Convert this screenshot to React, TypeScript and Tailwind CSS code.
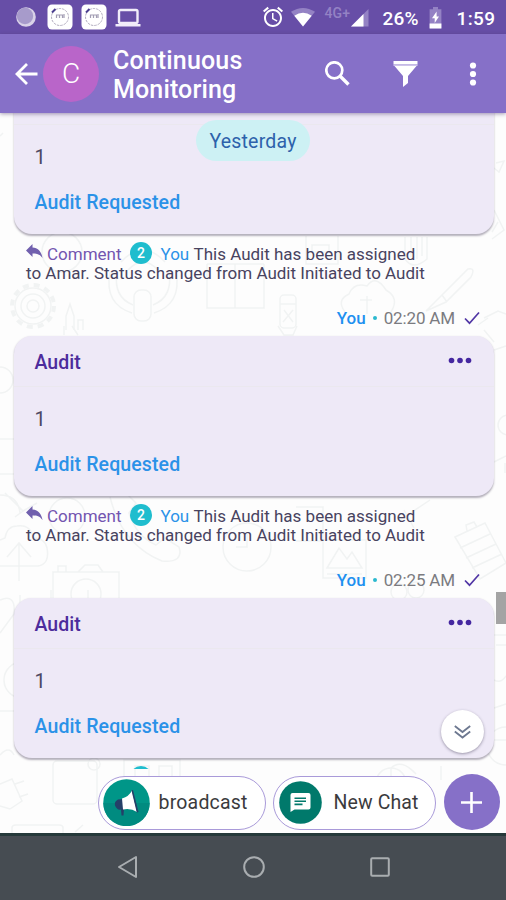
import type { ReactNode } from 'react'
import clsx from 'clsx'

interface Message {
  id: number
  title: string
  value: string
  status: string
  comments: number
  activity?: string[]
  time?: string
}

const ACTIVITY = [
  'This Audit has been assigned',
  'to Amar. Status changed from Audit Initiated to Audit',
]

const MESSAGES: Message[] = [
  { id: 1, title: '', value: '1', status: 'Audit Requested', comments: 2, activity: ACTIVITY, time: '02:20 AM' },
  { id: 2, title: 'Audit', value: '1', status: 'Audit Requested', comments: 2, activity: ACTIVITY, time: '02:25 AM' },
  { id: 3, title: 'Audit', value: '1', status: 'Audit Requested', comments: 2 },
]

const AppBadgeIcon = () => (
  <svg width="26" height="26" viewBox="0 0 26 26" fill="none">
    <rect x="0.5" y="0.5" width="25" height="25" rx="4.5" fill="#fff" />
    <circle cx="13" cy="13" r="8.5" stroke="#b3adbf" strokeDasharray="2.5 1" />
    <path d="M5 8.500L8.500 5" stroke="#4b3f8f" strokeWidth="2" />
    <path d="M9.500 14v-3h3v3m0-3h3v3m1.500-4v4" stroke="#a39eb4" strokeWidth="1.200" />
  </svg>
)

const StatusBar = () => (
  <div className="flex h-[34px] shrink-0 items-center bg-[#674ea7] text-white">
    <svg className="ml-4" width="20" height="20" viewBox="0 0 20 20">
      <circle cx="10" cy="10" r="9.8" fill="#d9d2e8" />
      <circle cx="9" cy="9" r="8.2" fill="#a79bcb" />
    </svg>
    <div className="ml-[10.5px] flex gap-2">
      <AppBadgeIcon />
      <AppBadgeIcon />
    </div>
    <svg className="mt-px ml-[8px]" width="26" height="20" viewBox="0 0 26 20" fill="none">
      <rect x="4" y="2" width="18.5" height="13" rx="1.5" stroke="#f1edfa" strokeWidth="2.4" />
      <path d="M0.5 16h25v2.5h-25z" fill="#f1edfa" />
    </svg>
    <svg className="ml-[120px]" width="24" height="24" viewBox="0 0 24 24" fill="#fff">
      <path d="M22 5.72l-4.6-3.86-1.29 1.53 4.6 3.86L22 5.72zM7.88 3.39L6.6 1.86 2 5.71l1.29 1.53 4.59-3.85zM12.5 8H11v6l4.75 2.85.75-1.23-4-2.37V8zM12 4c-4.97 0-9 4.03-9 9s4.02 9 9 9c4.97 0 9-4.03 9-9s-4.03-9-9-9zm0 16c-3.87 0-7-3.13-7-7s3.13-7 7-7 7 3.13 7 7-3.13 7-7 7z" />
    </svg>
    <svg className="ml-[6px]" width="24" height="20" viewBox="0 0 24 20">
      <path d="M12 19.5L0 4.8Q12-3 24 4.8z" fill="#9482c4" />
      <path d="M12 19.5L3.3 8.8Q12 2.5 20.7 8.8z" fill="#fff" />
    </svg>
    <span className="mb-[8px] ml-[10px] w-[27px] text-[14px] leading-[16px] font-medium tracking-[0.1px] whitespace-nowrap text-[#9482c4]">
      4G+
    </span>
    <svg className="mt-[2px] -ml-[0.5px]" width="18" height="18" viewBox="0 0 18 18">
      <path d="M0 17.5L17.5 0v17.5z" fill="#9482c4" />
      <path d="M0 17.5L12.5 5v12.5z" fill="#fff" />
    </svg>
    <span className="mt-[3px] ml-[13.5px] w-[38px] text-[19px] leading-[22px] font-medium tracking-[0.2px] whitespace-nowrap">
      26%
    </span>
    <svg className="mt-[2px] ml-[8.5px]" width="13" height="22" viewBox="0 0 13 22">
      <path d="M4 0h5v2.2h3.4v19H.6v-19H4z" fill="#9482c4" />
      <path d="M.6 16.5h11.8v5H.6zM7.6 4.5L3 11.3h2.7V16L10 9.5H7.6z" fill="#fff" />
    </svg>
    <span className="mt-[3px] ml-[14.5px] text-[19px] leading-[22px] font-medium tracking-[0.4px] whitespace-nowrap">
      1:59
    </span>
  </div>
)

const Header = () => (
  <header className="z-10 flex h-[79px] shrink-0 items-center bg-[#8670c8] text-white shadow-[0_1px_4px_rgba(60,40,90,0.45)]">
    <svg className="ml-[14.5px]" width="23" height="22" viewBox="0 0 23 22" fill="none">
      <path d="M12 1L2 11l10 10M2 11h20.5" stroke="#fff" strokeWidth="2.8" />
    </svg>
    <div className="ml-[5.5px] flex size-14 items-center justify-center rounded-full bg-[#b965c9] text-[28px] font-light">
      C
    </div>
    <h1 className="mt-[2px] ml-[14px] w-[200px] text-[25px] leading-[29px] font-medium tracking-[0.15px]">
      Continuous Monitoring
    </h1>
    <svg className="ml-[12px]" width="25" height="25" viewBox="0 0 25 25" fill="none">
      <circle cx="9.3" cy="9.3" r="8" stroke="#fff" strokeWidth="2.7" />
      <path d="M15 15l8.5 8.5" stroke="#fff" strokeWidth="3.3" />
    </svg>
    <svg className="ml-[42.5px]" width="25" height="26" viewBox="0 0 25 26">
      <path d="M.5 0h24v3.4H.5z" fill="#fff" />
      <path d="M.5 3.4h24v1.600H.5z" fill="#cfc5ea" />
      <path d="M1.5 5h22L15 15v7l-5 4V15z" fill="#fff" />
    </svg>
    <svg className="ml-[51px]" width="8" height="24" viewBox="0 0 8 24" fill="#fff">
      <circle cx="4" cy="3.5" r="3.1" />
      <circle cx="4" cy="12" r="3.1" />
      <circle cx="4" cy="20.5" r="3.1" />
    </svg>
  </header>
)

// faint doodles behind the conversation
const Wallpaper = () => (
  <svg
    className="absolute inset-0"
    width="506"
    height="720"
    viewBox="0 113 506 720"
    fill="none"
    stroke="#f1f3f3"
    strokeWidth="1.5"
  >
    <path d="M0 136l3-3M496 163l8-2-5 11-5-4" />
    <path d="M494 210l10 20-12 9M498 222l-6 10" />
    <circle cx="62" cy="252" r="20" />
    <circle cx="33" cy="306" r="21" strokeWidth="4" strokeDasharray="6 5" />
    <circle cx="33" cy="306" r="18" />
    <circle cx="33" cy="306" r="12" />
    <circle cx="33" cy="306" r="6" />
    <path d="M66 330v-14l4-12 4 12v14M78 330v-10h5v10" />
    <path d="M110 272q-6 32 22 41M176 272q6 32-22 41M117 272q-4 25 16 33M169 272q4 25-16 33" />
    <rect x="134" y="290" width="17" height="31" rx="7" />
    <path d="M121 262q22-24 44 0M128 270q15-16 30 0" />
    <path d="M207 264v44h28v-44M235 308h29v-44M207 264h57" />
    <path d="M306 236v28h32v-28M312 245h17v7h-17z" />
    <path d="M405 237v22q8 12 22 0v-22M411 237v20M417 237v22M422 237v19" />
    <rect x="280" y="295" width="16" height="33" rx="4" />
    <path d="M280 304h16M283 322l10-12M284 310l9 12" />
    <path d="M345 312q-9-12 4-18 5-12 18-8 9-12 19 4 14 8 5 22M367 296v18M360 300h12" />
    <path d="M426 311l16-16 26-26q8-2 3 8l-25 25-20 9M442 295l5 7" />
    <path d="M484 318l14-7 8 3M478 325l10-7" />
    <path d="M64 326v9M72 326l6 9M278 326l6 9h9l4-9" />
    <path d="M484 330l10 12M494 350l12-4" />
    <circle cx="0" cy="380" r="13" />
    <path d="M0 439h14M0 474h14" />
    <path d="M0 495q18 0 20 18M5 493l18 18 14-8M15 517l8-6" />
    <circle cx="508" cy="425" r="10" />
    <path d="M494 462l12-6M505 463v10" />
    <circle cx="67" cy="516" r="18" />
    <path d="M110 497q12 48 52 64 22 2 17-14l-14-9-9 7q-20-9-27-32l7-10-10-10" />
    <path d="M0 566h38q12-2 9-18-2-10-14-10-2-14-16-12-10 0-12 12L0 540M19 581v-38M7 557l12-14 12 14" />
    <path d="M53 572h66v42H53zM58 572v-6h8v6M78 572l7-7h13l5 7" />
    <circle cx="86" cy="594" r="15" />
    <circle cx="247" cy="547" r="24" />
    <path d="M247 532v15h-11" />
    <path d="M296 507h27v34h-27M400 520l30-20M404 510l10 18" />
    <rect x="323" y="540" width="43" height="38" />
    <path d="M327 568l12-20 8 11 5-7 10 16zM327 574h35" />
    <path d="M455 537l30-14 21 40-26 16zM460 548l30-14M466 558l30-14M472 568l30-14M467 531l-1-6 8-3 3 5" />
    <circle cx="399" cy="592" r="8" />
    <circle cx="416" cy="590" r="8" />
    <path d="M0 600q16-7 14 14L0 633M20 595v12M51 590v10M88 590v10" />
    <circle cx="22" cy="680" r="18" />
    <path d="M0 711h14M494 635h12M496 645h10M494 680q7 4 12-4M494 708l12-4" />
    <circle cx="506" cy="746" r="19" />
    <path d="M494 740h12M0 755q9-10 14 0" />
    <rect x="53" y="761" width="44" height="43" rx="4" />
    <circle cx="94" cy="764" r="6" />
    <path d="M124 780v-20h56v20M135 780v-14h14v14M159 780v-14h13v14" />
    <path d="M0 784l12-5 10 22-12 8M15 784l9-3M19 797l9-3M0 806l10 3" />
    <path d="M12 834v-6q0-3 4-3h43q4 0 4 3v6M75 832l8-7" />
    <circle cx="391" cy="783" r="15" />
    <path d="M391 768q10-10 25 6M391 768v10M441 766v14" />
  </svg>
)

const MoreIcon = () => (
  <svg className="mb-[2px]" width="24" height="7" viewBox="0 0 24 7" fill="#4527a0">
    <circle cx="3.5" cy="3.5" r="2.8" />
    <circle cx="12" cy="3.5" r="2.8" />
    <circle cx="20.5" cy="3.5" r="2.8" />
  </svg>
)

const MessageItem = ({ message }: { message: Message }) => (
  <div className="h-[262px] shrink-0">
    <div className="mr-3 ml-3.5 h-[160px] rounded-[18px] bg-[#eee9f7] shadow-[0_1.5px_2px_rgba(60,50,80,0.38)]">
      <div className="flex h-[51px] items-center justify-between border-b border-[#ebe8ef] pr-[22px] pl-[20.5px]">
        <span className="mt-[3px] text-[19.5px] font-medium text-[#4d2c9c]">{message.title}</span>
        <MoreIcon />
      </div>
      <p className="mt-[20px] pl-[20.5px] text-[20px] leading-6 text-[#4d4863]">{message.value}</p>
      <p className="mt-[22px] pl-[20.5px] text-[19.5px] leading-6 font-medium tracking-[0.12px] text-[#2b92e8]">
        {message.status}
      </p>
    </div>

    <div className="mt-[9px] pl-[26px] text-[17px] leading-5 whitespace-nowrap text-[#48435f]">
      <div className="flex h-5 items-center">
        <svg
          className={clsx('mb-1', !message.activity && 'invisible')}
          width="17"
          height="14"
          viewBox="0 0 17 14"
          fill="#7160ae"
        >
          <path d="M6.500 0v3.500C12.500 4 15.500 8 16.500 14 13.500 10 11 9.500 6.500 9.500V13L0 6.400z" />
        </svg>
        <span className="mt-px ml-1 w-[75px] text-[#7355b0]">{message.activity && 'Comment'}</span>
        <span className="ml-2 flex size-[22px] items-center justify-center rounded-full bg-[#1fbdce] text-[14px] font-medium text-white">
          {message.activity && message.comments}
        </span>
        {message.activity && (
          <>
            <span className="mt-px ml-[8.5px] w-[33px] text-[#2b92e8]">You</span>
            <span className="mt-px">{message.activity[0]}</span>
          </>
        )}
      </div>
      {message.activity && <div>{message.activity[1]}</div>}
    </div>

    {message.time && (
      <div className="mt-[25px] flex h-5 items-center justify-end pr-[26px] text-[17px]">
        <span className="mt-px font-medium text-[#1e90f0]">You</span>
        <span className="mx-[7px] size-1 rounded-full bg-[#2bb9cf]" />
        <span className="mt-px tracking-[-0.15px] text-[#7b7b80]">{message.time}</span>
        <svg className="ml-[9px]" width="16" height="14" viewBox="0 0 16 14" fill="none">
          <path d="M1 7.500L5.500 12.200 15 1.500" stroke="#5136a5" strokeWidth="1.700" />
        </svg>
      </div>
    )}
  </div>
)

interface ChipProps {
  icon: ReactNode
  label: string
  className?: string
}

const Chip = ({ icon, label, className }: ChipProps) => (
  <button
    className={clsx(
      'flex h-[54px] items-center rounded-full border border-[#a99ad9] bg-white text-[19.5px] whitespace-nowrap text-[#3b3b3d]',
      className
    )}
  >
    {icon}
    {label}
  </button>
)

const BroadcastIcon = () => (
  <svg className="mr-[9px]" width="47" height="47" viewBox="0 0 47 47">
    <circle cx="23.500" cy="23.500" r="23.200" fill="#009688" />
    <path d="M.3 24a23.200 23.200 0 0 0 46.400 0z" fill="#008b80" />
    <path d="M20 20l-5 .5q-4 2-3 6 2 5 6 4l.5 6h2l.5-7z" fill="#253f68" />
    <path d="M19 19.500Q26 17.500 29 11.500L34 33q-6-4-14-2.500z" fill="#fff" />
    <path d="M28.500 11.500l1.500-.5 5.500 22-1.700.6z" fill="#253f68" />
  </svg>
)

const NewChatIcon = () => (
  <svg className="mr-[12px]" width="43" height="43" viewBox="0 0 43 43">
    <circle cx="21.500" cy="21.500" r="21.300" fill="#00796b" />
    <path d="M13.500 12h16q2 0 2 2v12.500q0 2-2 2h-14L11.500 31V14q0-2 2-2z" fill="#fff" />
    <path d="M15.500 17.200h11.500M15.500 20.300h11.500M15.500 23.400h8" stroke="#00796b" strokeWidth="1.600" />
  </svg>
)

const Composer = () => (
  <div className="flex h-[64px] shrink-0 items-start pt-[5px] pl-[97.5px]">
    <Chip className="mt-[1.5px] w-[168px] pl-[4px] tracking-[0.2px]" icon={<BroadcastIcon />} label="broadcast" />
    <Chip className="mt-[1.5px] ml-[7px] w-[163.5px] pl-[5px] tracking-[0.1px]" icon={<NewChatIcon />} label="New Chat" />
    <button className="ml-[7.5px] flex size-14 items-center justify-center rounded-full bg-[#8670c8]">
      <svg width="21" height="21" viewBox="0 0 21 21" stroke="#fff" strokeWidth="2.600">
        <path d="M10.500 0v21M0 10.500h21" />
      </svg>
    </button>
  </div>
)

const NavBar = () => (
  <nav className="flex h-[67px] shrink-0 items-center border-t-[3px] border-[#25393a] bg-[#464c52] pb-[2px]">
    <svg className="ml-[116.5px]" width="21" height="24" viewBox="0 0 21 24" fill="none">
      <path d="M19 2v20L2 12z" stroke="#a9adb0" strokeWidth="2" strokeLinejoin="round" />
    </svg>
    <svg className="ml-[104px]" width="24" height="24" viewBox="0 0 24 24" fill="none">
      <circle cx="12" cy="12" r="9.800" stroke="#a9adb0" strokeWidth="2" />
    </svg>
    <svg className="ml-[104.5px]" width="20" height="20" viewBox="0 0 20 20" fill="none">
      <rect x="1.200" y="1.200" width="17.600" height="17.600" rx="1" stroke="#a9adb0" strokeWidth="2" />
    </svg>
  </nav>
)

export default function App() {
  return (
    <div className="flex h-[900px] w-[506px] flex-col overflow-hidden bg-[#fdfdfd] font-[Roboto,sans-serif]">
      <StatusBar />
      <Header />

      <main className="relative flex h-[720px] shrink-0 flex-col overflow-hidden">
        <Wallpaper />

        <div className="relative h-[656px] shrink-0 overflow-hidden">
          <div className="-mt-[39px] flex flex-col">
            {MESSAGES.map((message) => (
              <MessageItem key={message.id} message={message} />
            ))}
          </div>

          <div className="absolute top-[7px] left-[196px] flex h-[41px] w-[114px] items-center justify-center rounded-full bg-[#cdf1f4] pt-[2px] text-[19.5px] tracking-[0.2px] text-[#2d62ab]">
            Yesterday
          </div>
          <div className="absolute top-[479px] right-0 h-8 w-2.5 bg-[#a4a4a4]" />
          <button className="absolute top-[597px] left-[441px] flex size-[43px] items-center justify-center rounded-full bg-white shadow-[0_1px_3px_rgba(50,45,70,0.45)]">
            <svg width="17" height="14" viewBox="0 0 17 14" fill="none" stroke="#6d7890" strokeWidth="1.800">
              <path d="M.8 1l7.700 6 7.700-6M.8 6.500l7.700 6 7.700-6" />
            </svg>
          </button>
        </div>

        <div className="relative">
          <Composer />
        </div>
      </main>

      <NavBar />
    </div>
  )
}
